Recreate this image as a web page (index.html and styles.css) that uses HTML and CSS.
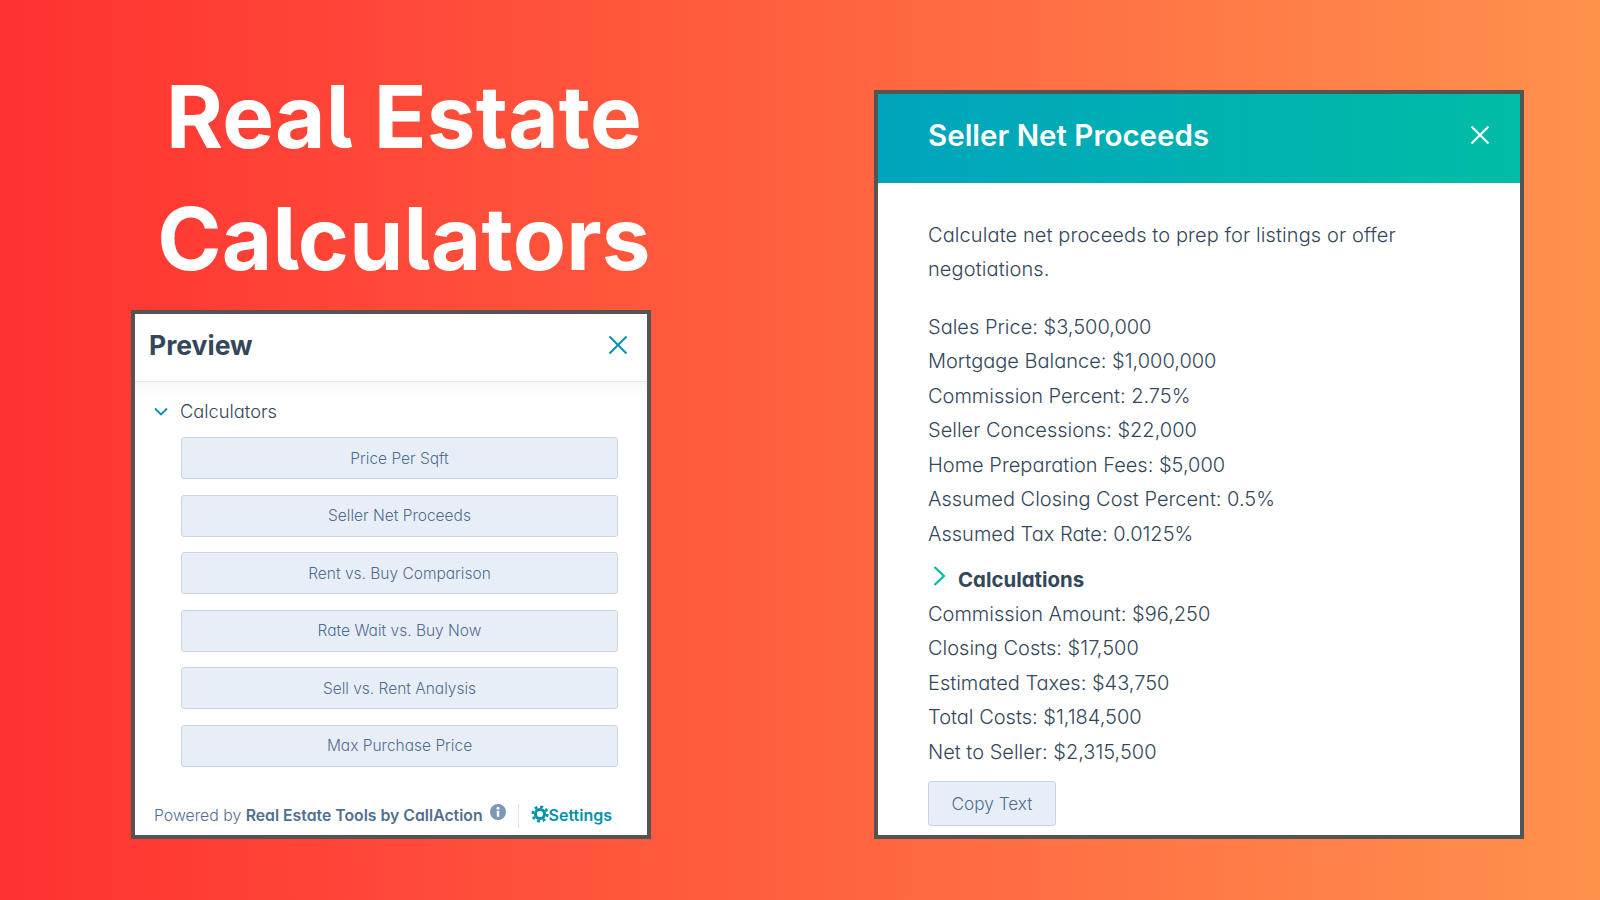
FILE: index.html
```html
<!DOCTYPE html>
<html lang="en">
<head>
<meta charset="utf-8">
<title>Real Estate Calculators</title>
<link rel="stylesheet" href="styles.css">
</head>
<body>
<main class="stage">
  <section class="left">
    <h1 class="title">Real Estate<br>Calculators</h1>
    <div class="preview">
      <header class="preview-head">
        <h2>Preview</h2>
        <svg class="x" viewBox="0 0 20 20"><path d="M1.5 1.5 18.500 18.500M18.500 1.500 1.500 18.500"/></svg>
      </header>
      <div class="preview-body">
        <div class="group">
          <svg class="chev-down" viewBox="0 0 14 9"><path d="M1 1.500 7 7.500 13 1.500"/></svg>
          <span>Calculators</span>
        </div>
        <ul class="btns">
          <li class="btn">Price Per Sqft</li>
          <li class="btn">Seller Net Proceeds</li>
          <li class="btn">Rent vs. Buy Comparison</li>
          <li class="btn">Rate Wait vs. Buy Now</li>
          <li class="btn">Sell vs. Rent Analysis</li>
          <li class="btn">Max Purchase Price</li>
        </ul>
      </div>
      <footer class="foot">
        <span class="powered">Powered by <b>Real Estate Tools by CallAction</b></span>
        <svg class="info" viewBox="0 0 16 16"><circle cx="8" cy="8" r="8"/><rect x="6.800" y="6.800" width="2.400" height="6" rx=".5"/><circle cx="8" cy="4.300" r="1.500"/></svg>
        <span class="sep"></span>
        <svg class="gear" viewBox="0 0 18 18"><circle class="teeth" cx="9" cy="9" r="7.300"/><circle class="ring" cx="9" cy="9" r="4.600"/></svg>
        <span class="settings">Settings</span>
      </footer>
    </div>
  </section>

  <section class="net">
    <header class="net-head">
      <h2>Seller Net Proceeds</h2>
      <svg class="x white" viewBox="0 0 20 20"><path d="M1.500 1.500 18.500 18.500M18.500 1.500 1.500 18.500"/></svg>
    </header>
    <div class="net-body">
      <p class="intro">Calculate net proceeds to prep for listings or offer negotiations.</p>
      <p>Sales Price: $3,500,000</p>
      <p>Mortgage Balance: $1,000,000</p>
      <p>Commission Percent: 2.75%</p>
      <p>Seller Concessions: $22,000</p>
      <p>Home Preparation Fees: $5,000</p>
      <p>Assumed Closing Cost Percent: 0.5%</p>
      <p>Assumed Tax Rate: 0.0125%</p>
      <div class="calc">
        <svg class="chev-right" viewBox="0 0 13 20"><path d="M1.500 1 11 10 1.500 19"/></svg>
        <strong>Calculations</strong>
      </div>
      <p>Commission Amount: $96,250</p>
      <p>Closing Costs: $17,500</p>
      <p>Estimated Taxes: $43,750</p>
      <p>Total Costs: $1,184,500</p>
      <p>Net to Seller: $2,315,500</p>
      <div class="copy">Copy Text</div>
    </div>
  </section>
</main>
</body>
</html>
```

FILE: styles.css
```css
* { box-sizing: border-box; }
html, body { margin: 0; padding: 0; }
body {
  width: 1600px;
  height: 900px;
  overflow: hidden;
  font-family: Inter, "Noto Sans", sans-serif;
  font-feature-settings: "cv11" 1;
}
.stage {
  display: flex;
  align-items: flex-start;
  width: 1600px;
  height: 900px;
  padding-left: 131px;
  background: linear-gradient(90deg, #ff3131 0%, #ff914d 100%);
}
.left { width: 520px; padding-top: 56px; }
.title {
  margin: 0 0 10px;
  padding-left: 26px;
  font: 700 87px/122px Inter, sans-serif;
  font-feature-settings: "cv05" 1;
  letter-spacing: .2px;
  color: #fff;
  text-align: center;
  white-space: nowrap;
}
.preview {
  display: flex;
  flex-direction: column;
  height: 529px;
  border: 4px solid #545454;
  background: #fff;
}
.preview-head {
  display: flex;
  align-items: center;
  justify-content: space-between;
  height: 68px;
  padding: 0 19px 6px 14px;
  border-bottom: 1.500px solid #e3e8ef;
}
.preview-head h2 {
  margin: 0;
  font-size: 26.500px;
  font-weight: 700;
  color: #33475b;
}
.x { width: 20px; height: 20px; }
.x path { fill: none; stroke: #0091ae; stroke-width: 2; }
.x.white path { stroke: #fff; }
.preview-body {
  flex: 1;
  padding: 0 29px 0 18px;
  background: linear-gradient(#f5f7fa 0, #fff 15px, #fff 100%);
}
.group {
  display: flex;
  align-items: center;
  gap: 12px;
  height: 55px;
  padding: 3px 0 0 1px;
  font-size: 18.300px;
  font-weight: 300;
  color: #33475b;
}
.chev-down { width: 14px; height: 9px; flex: none; }
.chev-down path { fill: none; stroke: #0091ae; stroke-width: 1.800; }
.btns {
  display: flex;
  flex-direction: column;
  gap: 15.600px;
  margin: 0 0 0 28px;
  padding: 0;
  list-style: none;
}
.btn {
  display: flex;
  align-items: center;
  justify-content: center;
  height: 42px;
  border: 1.500px solid #cbd6e2;
  border-radius: 3px;
  background: #e8eef7;
  font-size: 15.500px;
  font-weight: 300;
  color: #506e91;
}
.foot {
  display: flex;
  align-items: center;
  height: 37px;
  margin-bottom: 1px;
  padding-left: 19px;
  font-size: 15.800px;
  color: #516f90;
  white-space: nowrap;
}
.powered { font-weight: 300; }
.powered b { font-weight: 600; }
.info { width: 16px; height: 16px; margin: -7px 0 0 7px; }
.info circle:first-child { fill: #7c98b6; }
.info rect, .info circle:last-child { fill: #fff; }
.sep { width: 1px; height: 24px; margin: 0 12px 0 12px; background: #dfe3eb; }
.gear { width: 18px; height: 18px; flex: none; margin-bottom: 3px; }
.gear circle { fill: none; stroke: #0091ae; }
.gear .teeth { stroke-width: 2.600; stroke-dasharray: 2.900 2.830; }
.gear .ring { stroke-width: 3; }
.settings { margin-bottom: 2px; font-size: 16px; font-weight: 600; color: #0091ae; }

.net {
  display: flex;
  flex-direction: column;
  width: 650px;
  height: 749px;
  margin: 90px 0 0 223px;
  border: 4px solid #545454;
  background: #fff;
  overflow: hidden;
}
.net-head {
  display: flex;
  flex: none;
  align-items: center;
  justify-content: space-between;
  height: 89px;
  padding: 0 30px 8px 50px;
  background: linear-gradient(90deg, #00a4bd, #00bda5);
}
.net-head h2 {
  margin: 0;
  font-size: 29.500px;
  font-weight: 600;
  color: #fff;
}
.net-body {
  padding: 34.500px 50px 0;
  font-size: 20px;
  font-weight: 350;
  color: #33475b;
}
.net-body p { margin: 0; line-height: 34.500px; }
.net-body .intro { margin-bottom: 23px; letter-spacing: .1px; }
.calc {
  display: flex;
  align-items: center;
  gap: 12px;
  height: 35px;
  margin: 10.500px 0 0 5px;
}
.calc strong { font-size: 20.400px; font-weight: 700; }
.chev-right { width: 13px; height: 20px; margin-top: -6px; flex: none; }
.chev-right path { fill: none; stroke: #00bda5; stroke-width: 2.200; }
.copy {
  display: flex;
  align-items: center;
  justify-content: center;
  width: 128px;
  height: 45px;
  margin-top: 11.500px;
  border: 1.500px solid #cbd6e2;
  border-radius: 3px;
  background: #e8eef7;
  font-size: 17.200px;
  color: #506e91;
}
```
